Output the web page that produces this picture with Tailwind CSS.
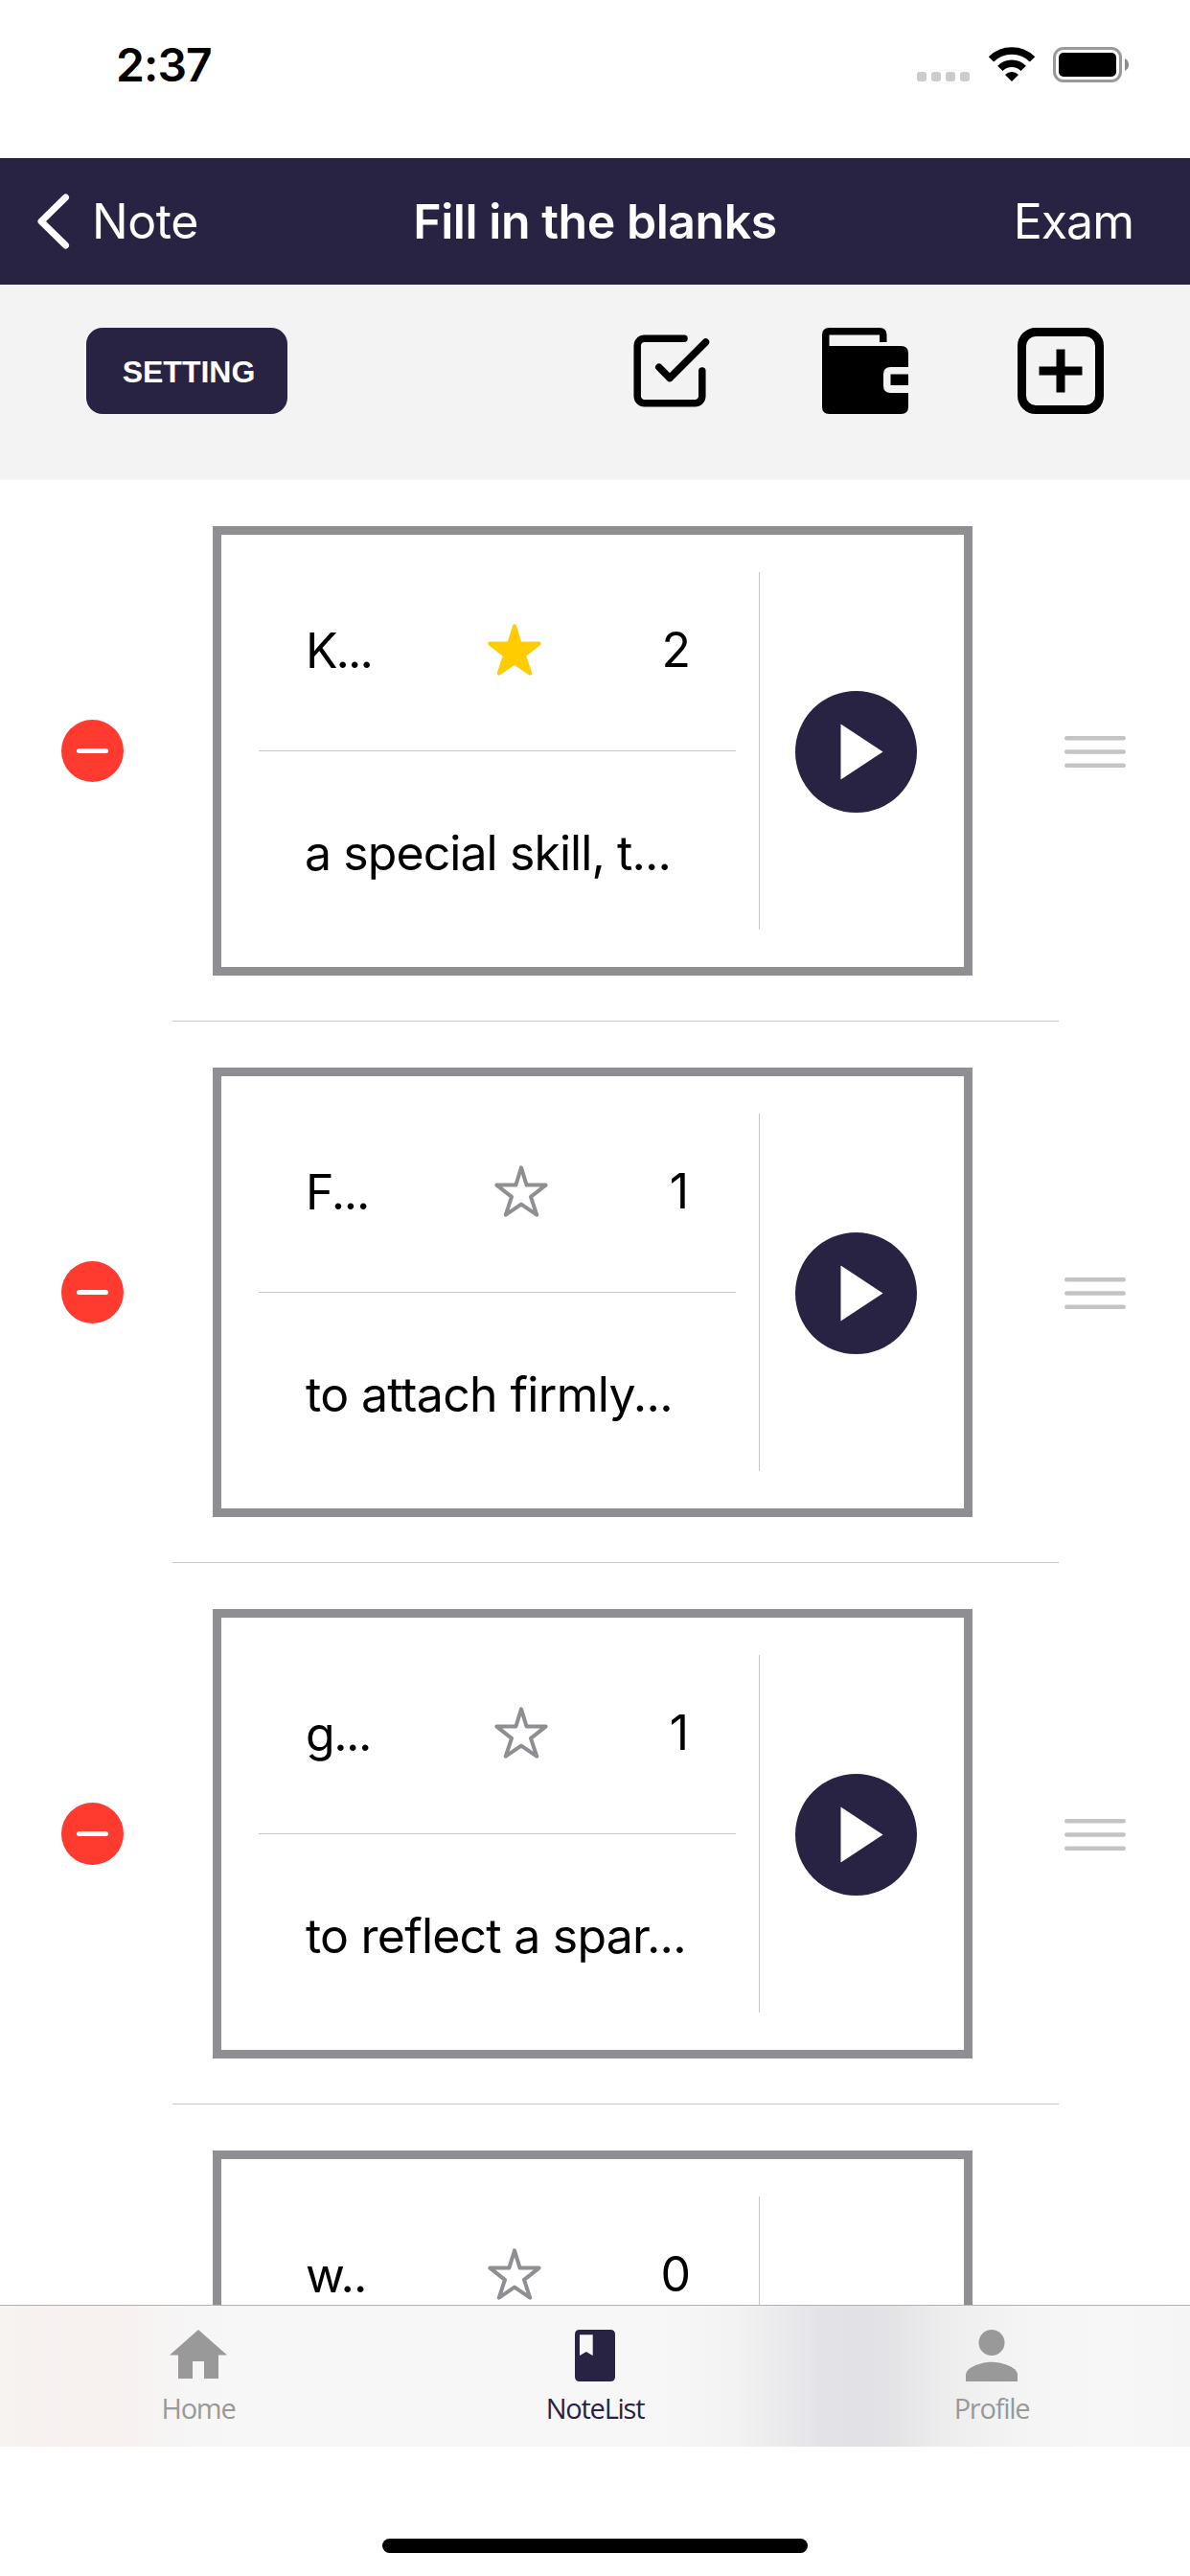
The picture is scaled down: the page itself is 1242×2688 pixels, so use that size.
<!DOCTYPE html>
<html lang="en">
<head>
<meta charset="utf-8">
<title>Fill in the blanks</title>
<script src="https://cdn.jsdelivr.net/npm/@tailwindcss/browser@4"></script>
</head>
<body class="bg-white">
<svg class="hidden">
  <symbol id="star" viewBox="0 0 56 54">
    <path d="M28 2.3 33.6 20.6H53.6L38 32.8 44.2 51.7 28 40.6 11.8 51.7 18 32.8 2.4 20.6H22.4Z" stroke-width="4" stroke-linejoin="round"/>
  </symbol>
  <symbol id="minus" viewBox="0 0 65 65">
    <circle cx="32.5" cy="32.5" r="32.5" fill="#ff3b30"/>
    <rect x="16" y="30" width="33" height="5" rx="2.5" fill="#fff"/>
  </symbol>
  <symbol id="play" viewBox="0 0 127 127">
    <circle cx="63.5" cy="63.5" r="63.5" fill="#282342"/>
    <path d="M47.5 34.5V92.500L91.500 63.500Z" fill="#fff"/>
  </symbol>
  <symbol id="grip" viewBox="0 0 64 33">
    <g fill="#c4c4c6"><rect width="64" height="4.500" rx="2.200"/><rect y="14.250" width="64" height="4.500" rx="2.200"/><rect y="28.500" width="64" height="4.500" rx="2.200"/></g>
  </symbol>
</svg>

<div class="flex h-[2688px] w-[1242px] flex-col overflow-hidden bg-white font-['Inter',sans-serif] text-black">

  <!-- Status bar -->
  <div class="flex h-[165px] shrink-0 items-start justify-between pl-[121px] pr-[64px]">
    <div class="pt-[38px] text-[48px] leading-[60px] font-semibold tracking-[-0.9px]">2:37</div>
    <div class="flex items-end pt-[49px]">
      <svg class="mb-px h-[10px] w-[55px]" viewBox="0 0 55 10" fill="#ccc"><rect width="10" height="10" rx="3"/><rect x="15" width="10" height="10" rx="3"/><rect x="30" width="10" height="10" rx="3"/><rect x="45" width="10" height="10" rx="3"/></svg>
      <svg class="mb-px ml-[20px] h-[36px] w-[48px]" viewBox="0 0 48 36" fill="none" stroke="#000" stroke-width="7.500">
        <path d="M2.500 12.900A30.500 30.500 0 0 1 45.500 12.900M11.800 22.300A17.200 17.200 0 0 1 36.200 22.300"/>
        <path d="M24 36 17 28.900A10 10 0 0 1 31 28.900Z" fill="#000" stroke="none"/>
      </svg>
      <svg class="ml-[19px] h-[37px] w-[79px]" viewBox="0 0 79 37">
        <rect x="1.500" y="1.500" width="69" height="34" rx="9.500" fill="none" stroke="#999" stroke-width="3"/>
        <rect x="6" y="6" width="60" height="25" rx="5" fill="#000"/>
        <path d="M75 12Q79 14 79 18.500T75 25Z" fill="#8c8c8c"/>
      </svg>
    </div>
  </div>

  <!-- Navigation bar -->
  <div class="grid h-[132px] shrink-0 grid-cols-3 items-center bg-[#282342] text-[50px] text-white">
    <div class="flex items-center pl-[38px]">
      <svg class="h-[58px] w-[35px]" viewBox="0 0 35 58" fill="none" stroke="#fff" stroke-width="7" stroke-linecap="round" stroke-linejoin="round"><path d="M30.500 4 5 29 30.500 54"/></svg>
      <span class="ml-[23px] tracking-[-0.400px]">Note</span>
    </div>
    <div class="text-center font-semibold tracking-[-0.450px] whitespace-nowrap">Fill in the blanks</div>
    <div class="pr-[59px] text-right tracking-[-1px]">Exam</div>
  </div>

  <!-- Toolbar -->
  <div class="flex h-[204px] shrink-0 items-start bg-[#f3f3f3] pt-[45px] pl-[90px]">
    <div class="flex h-[90px] w-[210px] items-center justify-center rounded-[17px] bg-[#282342] pt-[2px] pl-[4px] font-['Liberation_Sans',sans-serif] text-[32px] font-bold text-white">SETTING</div>
    <svg class="ml-[354px] h-[90px] w-[90px]" viewBox="0 0 90 90" fill="none" stroke="#000" stroke-width="7.500" stroke-linecap="round" stroke-linejoin="round">
      <path d="M60 11.200H18.700A7.500 7.500 0 0 0 11.200 18.700V71.300A7.500 7.500 0 0 0 18.700 78.800H71.300A7.500 7.500 0 0 0 78.800 71.300V45"/>
      <path d="M33.800 41.200 45 52.500 82.500 15"/>
    </svg>
    <svg class="ml-[114px] h-[90px] w-[90px]" viewBox="0 0 90 90">
      <path fill-rule="evenodd" d="M7.500 0H60Q67.500 0 67.500 7.500V15H60V7.500H7.500V19H82.500Q90 19 90 26.500V41H71.500Q64 41 64 48.500V60.500Q64 68 71.500 68H90V82.500Q90 90 82.500 90H7.500Q0 90 0 82.500V7.500Q0 0 7.500 0Z"/>
      <rect x="71.500" y="48.500" width="18.500" height="11.500"/>
    </svg>
    <svg class="ml-[114px] h-[90px] w-[90px]" viewBox="0 0 90 90">
      <rect x="4.500" y="4.500" width="81" height="81" rx="14.500" fill="none" stroke="#000" stroke-width="9"/>
      <path d="M22.500 45H67.500M45 22.500V67.500" stroke="#000" stroke-width="9"/>
    </svg>
  </div>

  <!-- Note list -->
  <div class="h-[1904px] shrink-0 overflow-hidden">

    <div class="h-[565px]">
      <div class="flex h-[564px] items-center pt-px pl-[64px]">
        <svg class="size-[65px]"><use href="#minus"/></svg>
        <div class="ml-[93px] flex h-[469px] w-[793px] border-[9px] border-[#8e8e93] p-[39px]">
          <div class="flex w-[498px] flex-col">
            <div class="flex h-[186px] items-center justify-between pb-[22px] pr-[47px] pl-[49px] text-[50px]">
              <div class="w-[65px] whitespace-nowrap tracking-[-2px]">K...</div>
              <svg class="mb-[2px] h-[54px] w-[56px] fill-[#ffcc00] stroke-[#ffcc00]"><use href="#star"/></svg>
              <div class="mb-[2px]">2</div>
            </div>
            <div class="h-px bg-[#c6c6c8]"></div>
            <div class="flex h-[186px] items-center pt-[26px] pl-[48px] text-[50px] whitespace-nowrap tracking-[-0.930px]">a special skill, t...</div>
          </div>
          <div class="ml-[24px] w-px bg-[#c6c6c8]"></div>
          <div class="ml-[37px] flex items-center pt-[2px]"><svg class="size-[127px]"><use href="#play"/></svg></div>
        </div>
        <svg class="mt-[2px] ml-[96px] h-[33px] w-[64px]"><use href="#grip"/></svg>
      </div>
      <div class="mr-[137px] ml-[180px] h-px bg-[#c6c6c8]"></div>
    </div>

    <div class="h-[565px]">
      <div class="flex h-[564px] items-center pt-px pl-[64px]">
        <svg class="size-[65px]"><use href="#minus"/></svg>
        <div class="ml-[93px] flex h-[469px] w-[793px] border-[9px] border-[#8e8e93] p-[39px]">
          <div class="flex w-[498px] flex-col">
            <div class="flex h-[186px] items-center justify-between pb-[22px] pr-[49px] pl-[49px] text-[50px]">
              <div class="w-[65px] whitespace-nowrap tracking-[-1.200px]">F...</div>
              <svg class="mb-[2px] ml-[5px] h-[54px] w-[56px] fill-none stroke-[#8e8e93]"><use href="#star"/></svg>
              <div class="mb-[2px]">1</div>
            </div>
            <div class="h-px bg-[#c6c6c8]"></div>
            <div class="flex h-[186px] items-center pt-[26px] pl-[49px] text-[50px] whitespace-nowrap tracking-[-0.660px]">to attach firmly...</div>
          </div>
          <div class="ml-[24px] w-px bg-[#c6c6c8]"></div>
          <div class="ml-[37px] flex items-center pt-[2px]"><svg class="size-[127px]"><use href="#play"/></svg></div>
        </div>
        <svg class="mt-[2px] ml-[96px] h-[33px] w-[64px]"><use href="#grip"/></svg>
      </div>
      <div class="mr-[137px] ml-[180px] h-px bg-[#c6c6c8]"></div>
    </div>

    <div class="h-[565px]">
      <div class="flex h-[564px] items-center pt-px pl-[64px]">
        <svg class="size-[65px]"><use href="#minus"/></svg>
        <div class="ml-[93px] flex h-[469px] w-[793px] border-[9px] border-[#8e8e93] p-[39px]">
          <div class="flex w-[498px] flex-col">
            <div class="flex h-[186px] items-center justify-between pb-[22px] pr-[49px] pl-[49px] text-[50px]">
              <div class="w-[65px] whitespace-nowrap tracking-[-1.500px]">g...</div>
              <svg class="mb-[2px] ml-[5px] h-[54px] w-[56px] fill-none stroke-[#8e8e93]"><use href="#star"/></svg>
              <div class="mb-[2px]">1</div>
            </div>
            <div class="h-px bg-[#c6c6c8]"></div>
            <div class="flex h-[186px] items-center pt-[26px] pl-[49px] text-[50px] whitespace-nowrap tracking-[-0.780px]">to reflect a spar...</div>
          </div>
          <div class="ml-[24px] w-px bg-[#c6c6c8]"></div>
          <div class="ml-[37px] flex items-center pt-[2px]"><svg class="size-[127px]"><use href="#play"/></svg></div>
        </div>
        <svg class="mt-[2px] ml-[96px] h-[33px] w-[64px]"><use href="#grip"/></svg>
      </div>
      <div class="mr-[137px] ml-[180px] h-px bg-[#c6c6c8]"></div>
    </div>

    <!-- Last card continues beneath the tab bar -->
    <div class="h-[209px] overflow-hidden pt-[48px] pl-[222px]">
      <div class="flex h-[161px] w-[793px] border-[9px] border-b-0 border-[#8e8e93] px-[39px] pt-[39px]">
        <div class="h-[113px] w-[498px]">
          <div class="flex h-[186px] items-center justify-between pb-[22px] pr-[47px] pl-[49px] text-[50px]">
            <div class="w-[65px] whitespace-nowrap tracking-[-0.800px]">w..</div>
            <svg class="mb-[2px] h-[54px] w-[56px] fill-none stroke-[#8e8e93]"><use href="#star"/></svg>
            <div class="mb-[2px]">0</div>
          </div>
        </div>
        <div class="ml-[24px] w-px bg-[#c6c6c8]"></div>
      </div>
    </div>
  </div>

  <!-- Tab bar -->
  <div class="grid h-[148px] shrink-0 grid-cols-3 border-t border-[#b2b2b2] bg-[linear-gradient(90deg,#f6f3f1_0px,#f7f1f0_70px,#f7f2f1_140px,#f6f6f6_200px,#f7f7f7_260px,#f7f7f7_690px,#f3f3f3_765px,#ececee_805px,#e3e2e7_860px,#e2e1e6_900px,#e4e4e7_935px,#ececed_980px,#f1f1f1_1025px,#f5f5f5_1080px,#f7f7f7_1160px,#f5f5f5_1242px)] font-['Open_Sans',sans-serif] text-[29px] leading-[36px] tracking-[-1.250px]">
    <div class="flex flex-col items-center gap-[10px] pt-[25px] text-[#999]">
      <svg class="h-[54px] w-[60px]" viewBox="0 0 60 54" fill="currentColor"><path d="M30 0 60 26.500H51V51H36V33H24V51H9V26.500H0Z"/></svg>
      <span>Home</span>
    </div>
    <div class="flex flex-col items-center gap-[10px] pt-[25px] text-[#282342]">
      <svg class="h-[54px] w-[42px]" viewBox="0 0 42 54" fill="currentColor"><path fill-rule="evenodd" d="M5 0H37Q42 0 42 5V49Q42 54 37 54H5Q0 54 0 49V5Q0 0 5 0ZM5 5.300V27L11.800 23 18.700 27V5.300Z"/></svg>
      <span>NoteList</span>
    </div>
    <div class="flex flex-col items-center gap-[10px] pt-[25px] text-[#999]">
      <svg class="h-[54px] w-[54px]" viewBox="0 0 54 54" fill="currentColor"><circle cx="27" cy="13.500" r="13.500"/><path d="M0 54V47.250C0 38.300 18 33.750 27 33.750S54 38.300 54 47.250V54Z"/></svg>
      <span>Profile</span>
    </div>
  </div>

  <!-- Home indicator -->
  <div class="flex grow justify-center pt-[96px]">
    <div class="h-[15px] w-[444px] rounded-full bg-black"></div>
  </div>
</div>
</body>
</html>
